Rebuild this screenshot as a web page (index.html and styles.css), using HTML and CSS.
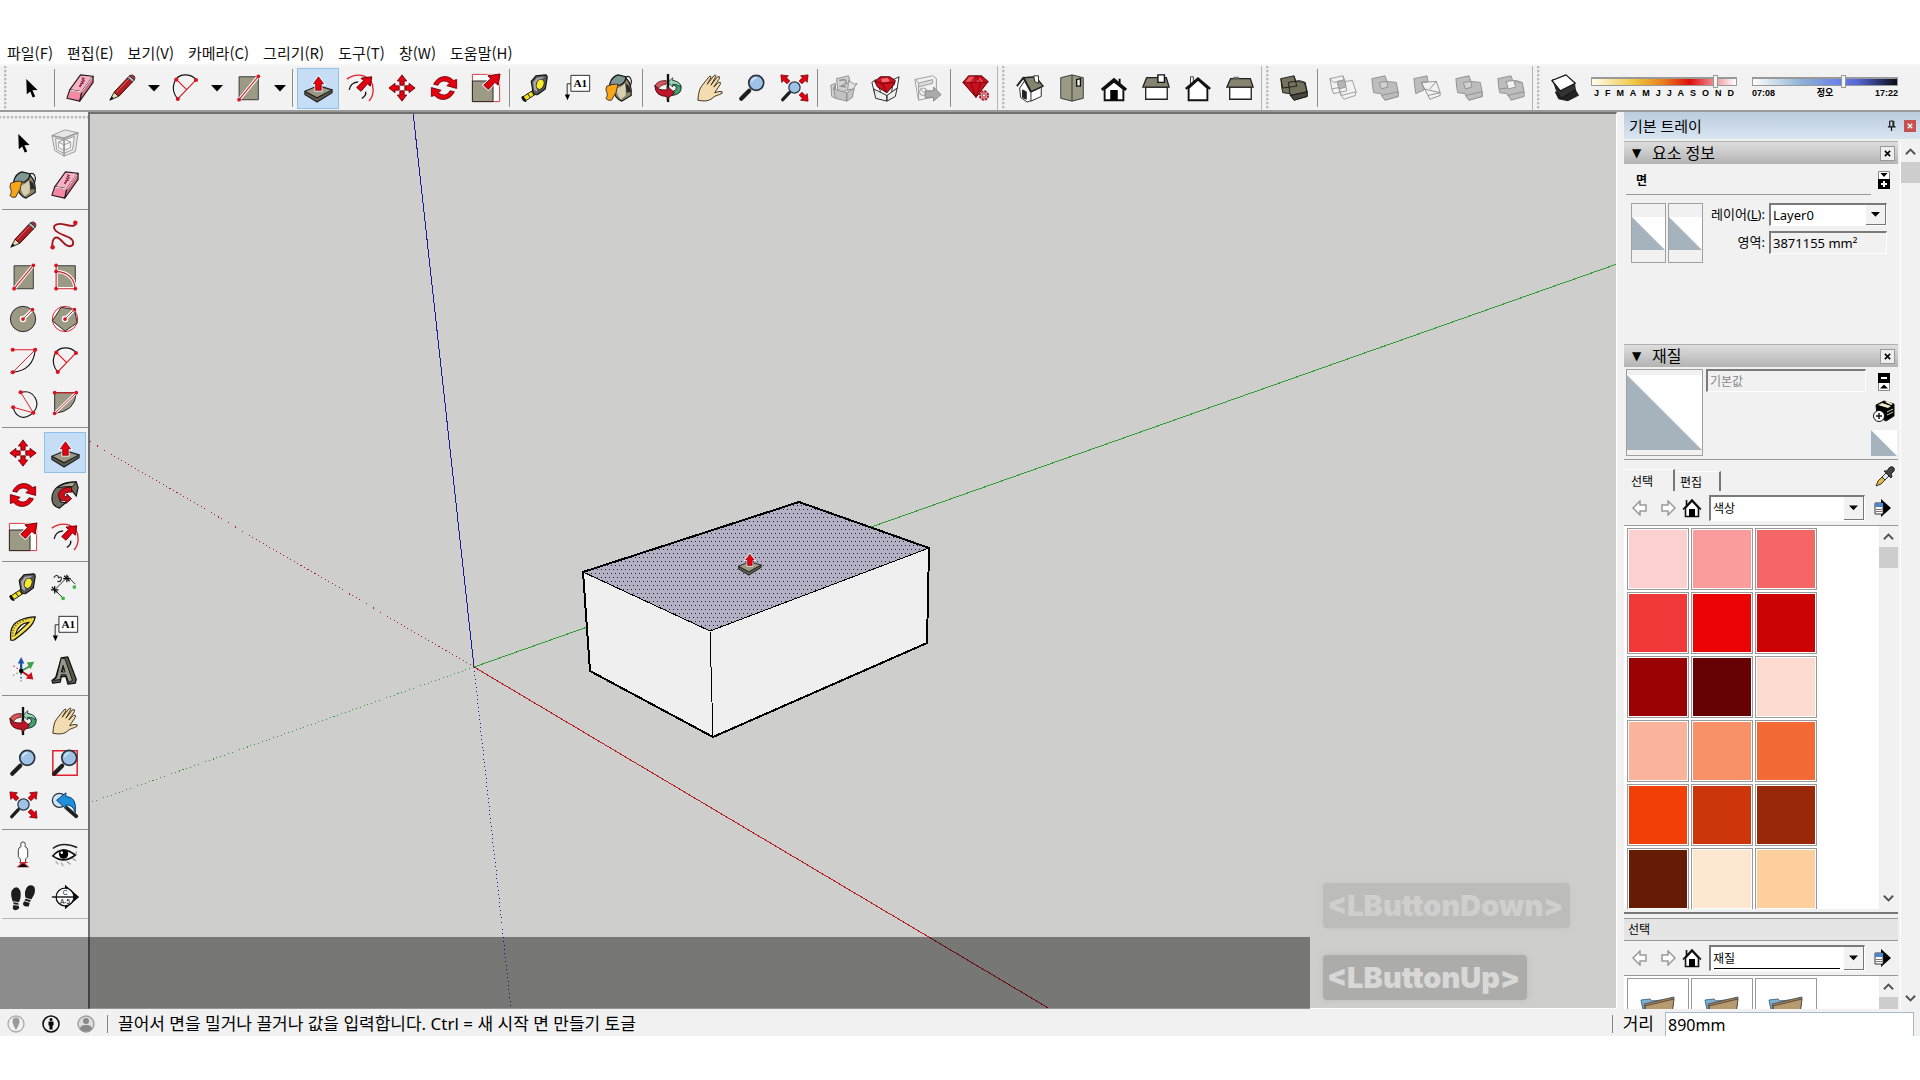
FILE: index.html
```html
<!DOCTYPE html>
<html lang="ko">
<head>
    <meta charset="utf-8">
    <title>모델링</title>
    <link rel="stylesheet" href="styles.css">
</head>
<body>

<!-- icon set, 32x32 grid -->
<svg class="defs" aria-hidden="true">
    <defs>
        <pattern id="dots" width="4" height="8" patternUnits="userSpaceOnUse">
            <rect width="4" height="8" fill="#b3b1c2"/>
            <rect x="1" y="1" width="1" height="1" fill="#1c1c50"/>
            <rect x="3" y="5" width="1" height="1" fill="#1c1c50"/>
        </pattern>
        <symbol id="i-select" viewBox="0 0 32 32"><path d="M11 6.500 23 18l-5.500.4L20.500 25l-2.700 1.200-2.600-6.600-3.700 3z"/></symbol>
        <symbol id="i-eraser" viewBox="0 0 32 32">
            <g stroke="#2a1a1e" stroke-width="1.200" stroke-linejoin="round">
                <path fill="#f7b3c4" d="M5 18 16.500 2 30 3.500 18 20z"/>
                <path fill="#f58aa5" d="M5 18 18 20l-2.300 10L2 27z"/>
                <path fill="#d96c88" d="M18 20 30 3.500V10L15.700 30z"/>
            </g>
            <path d="M18 5l3 1-3 1 3 1.500-4 .5 3 2-4 .5 2 1.500-3 .8 2 1.200" fill="none" stroke="#7a2038"/>
            <path d="M5.500 18.300 18 20.200 29 5" fill="none" stroke="#fff"/>
        </symbol>
        <symbol id="i-pencil" viewBox="0 0 32 32">
            <path fill="#ead9a8" stroke="#222" d="M3 29 7.500 20.500l5.200 4.300z"/>
            <path fill="#b01c22" stroke="#2a0a0a" d="M7.500 20.500 22 5l5.200 4.500-14.500 15.300z"/>
            <path stroke="#e8696c" d="M9.500 21 23.500 6.200"/>
            <path fill="#b9b9b9" stroke="#333" d="M22 5l2-2 5.200 4.300-2 2.200z"/>
            <path fill="#c2283a" stroke="#333" d="M24 3q3-2 5 .2 1.500 2 .2 4.100z"/>
            <path d="M3 29l2-4 2.200 2z"/>
        </symbol>
        <symbol id="i-free" viewBox="0 0 32 32">
            <path d="M2.500 28.500C2 19 6 17 10 20s6 8 11 8 5-6 0-9-13-4-16-9 4-7 11-5 13 2 11-3" fill="none" stroke="#a3131d" stroke-width="2"/>
            <g fill="#d9131f"><circle cx="2.800" cy="29" r="2.400"/><circle cx="27" cy="2.800" r="2.400"/></g>
        </symbol>
        <symbol id="i-rect" viewBox="0 0 32 32">
            <path fill="#9c9a84" stroke="#333" d="M6.500 4H27v24.500H6.500z"/>
            <path stroke="#fff" stroke-width="3.500" d="M6.500 28.500 27 3.500"/><path stroke="#c9202a" stroke-width="1.200" d="M6.500 28.500 27 3.500"/>
            <g fill="#d9131f"><circle cx="6.500" cy="28.500" r="2"/><circle cx="27" cy="3.500" r="2"/></g>
        </symbol>
        <symbol id="i-rrect" viewBox="0 0 32 32">
            <path fill="#9c9a84" stroke="#333" d="M6.500 4H27v24.500H6.500z"/>
            <path fill="none" stroke="#fff" stroke-width="3.500" d="M6.500 4v24.500H27Q25 11 6.500 10"/>
            <path fill="none" stroke="#c9202a" stroke-width="1.200" d="M6.500 4v24.500H27Q25 11 6.500 10"/>
            <g fill="#d9131f"><circle cx="6.500" cy="3.500" r="2"/><circle cx="6.500" cy="10" r="2"/><circle cx="6.500" cy="28.500" r="2"/><circle cx="27" cy="28.500" r="2"/></g>
        </symbol>
        <symbol id="i-circle" viewBox="0 0 32 32">
            <circle cx="16" cy="16" r="13.500" fill="#9c9a84" stroke="#222"/>
            <circle cx="16" cy="16" r="3.500" fill="#fff"/><path stroke="#fff" stroke-width="3.500" d="M16 16l10-10"/><path stroke="#c9202a" d="M16 16l10-10"/>
            <g fill="#d9131f"><circle cx="16" cy="16" r="2"/><circle cx="26" cy="6" r="2"/></g>
        </symbol>
        <symbol id="i-poly" viewBox="0 0 32 32">
            <circle cx="16" cy="16" r="13.500" fill="#fff" stroke="#d9131f"/>
            <path fill="#9c9a84" stroke="#222" d="M12 3.500 26 6l3 14-13 9L2.500 18z"/>
            <circle cx="16" cy="16" r="3.500" fill="#fff"/><path stroke="#fff" stroke-width="3.500" d="M16 16l10-10"/><path stroke="#c9202a" d="M16 16l10-10"/>
            <g fill="#d9131f"><circle cx="16" cy="16" r="2"/><circle cx="26" cy="6" r="2"/></g>
        </symbol>
        <symbol id="i-arc1" viewBox="0 0 32 32">
            <path fill="none" stroke="#111" stroke-width="1.200" d="M5 28Q27 26 29 4"/>
            <path fill="none" stroke="#d9131f" d="M5 4h24L5 28"/>
            <g fill="#d9131f"><circle cx="5" cy="4" r="2.200"/><circle cx="29" cy="4" r="2.200"/><circle cx="5" cy="28" r="2.200"/></g>
        </symbol>
        <symbol id="i-arc2" viewBox="0 0 32 32">
            <path fill="none" stroke="#111" stroke-width="1.200" d="M8 27.500C-1 16 5 2 16 2q8 0 12 5.500"/>
            <path fill="none" stroke="#d9131f" stroke-width="1.200" d="M7 7l10.500 10.500M8.300 27.500 27.700 7.300"/>
            <g fill="#d9131f"><circle cx="6.700" cy="7" r="2.200"/><circle cx="27.700" cy="7.500" r="2.200"/><circle cx="8.300" cy="27.700" r="2.200"/></g>
        </symbol>
        <symbol id="i-arc3" viewBox="0 0 32 32">
            <path fill="none" stroke="#111" stroke-width="1.200" d="M14 4.500C28 1 36 17 27 26S8 32 5.500 20.500"/>
            <path fill="none" stroke="#d9131f" d="M13.500 4.500 27 26.500 5.500 20.500"/>
            <g fill="#d9131f"><circle cx="13.500" cy="4.500" r="2.200"/><circle cx="27" cy="26.500" r="2.200"/><circle cx="5.500" cy="20.500" r="2.200"/></g>
        </symbol>
        <symbol id="i-pie" viewBox="0 0 32 32">
            <path fill="#9c9a84" stroke="#222" d="M5 27V5h23Q27 25 5 27z"/>
            <path fill="none" stroke="#fff" stroke-width="3" d="M5 27 28 5"/><path fill="none" stroke="#d9131f" d="M5 5h23L5 27"/>
            <g fill="#d9131f"><circle cx="5" cy="5" r="2"/><circle cx="28" cy="5" r="2"/><circle cx="5" cy="27" r="2"/></g>
        </symbol>
        <symbol id="i-push" viewBox="0 0 32 32">
            <g stroke="#222" stroke-width="1.200" stroke-linejoin="round">
                <path fill="#5c5b4d" d="M2 19.500 15 26.500 31 18v3L15 31 2 23z"/>
                <path fill="#9c9a84" d="M2 19.500 16 13.500 31 18 15 26.500z"/>
            </g>
            <path fill="#e3000f" stroke="#fff" stroke-width="2.400" d="M16.500 4 22 11.500h-2.500v7h-6v-7H11z"/>
            <path fill="#e3000f" stroke="#7a0008" stroke-width=".8" d="M16.500 4 22 11.500h-2.500v7h-6v-7H11z"/>
        </symbol>
        <symbol id="i-offset" viewBox="0 0 32 32">
            <path fill="none" stroke="#e0202a" stroke-width="1.400" d="M2 6.500C14-2 30 3 30 18q0 7-4.500 12"/>
            <path fill="none" stroke="#111" stroke-width="1.400" d="M4.500 18Q6 10 14 9.500M22 20q1 4-4 7"/>
            <path fill="#e3000f" stroke="#6a0008" d="M28.500 4 27 14l-3-2.500-7 8-4.500-4 7.500-7.500-3-2.500z"/>
        </symbol>
        <symbol id="i-move" viewBox="0 0 32 32">
            <g fill="#e3000f" stroke="#6a0008" stroke-width=".9">
                <path d="M16 2l5 6.500h-2.700V13h-4.600V8.500H11z"/><path d="M16 30l5-6.500h-2.700V19h-4.600v4.500H11z"/>
                <path d="M2 16l6.500-5v2.700H13v4.600H8.500V21z"/><path d="M30 16l-6.500-5v2.700H19v4.600h4.500V21z"/>
            </g>
        </symbol>
        <symbol id="i-rotate" viewBox="0 0 32 32">
            <g fill="#e3000f" stroke="#6a0008" stroke-width=".9">
                <path d="M5 12C9 3 20 1 26 8l3.500-1v9.500L19 13.500l3-2.300C18 7 12 8 9.500 13z"/>
                <path d="M27 20C23 29 12 31 6 24l-3.500 1v-9.500L13 18.500l-3 2.300c4 4.200 10 3.200 12.500-1.800z"/>
            </g>
        </symbol>
        <symbol id="i-scale" viewBox="0 0 32 32">
            <path fill="#fff" stroke="#e0303a" d="M1.500 1.500h29v29h-29z"/>
            <path fill="#9c9a84" stroke="#222" d="M1.500 8.500h22v22h-22z"/>
            <path fill="#e3000f" stroke="#fff" stroke-width="2.600" d="M31 1 29 13l-3.500-3-7 7.500-5-4.500L21 6l-3-3z"/>
            <path fill="#e3000f" stroke="#6a0008" d="M31 1 29 13l-3.500-3-7 7.500-5-4.500L21 6l-3-3z"/>
        </symbol>
        <symbol id="i-follow" viewBox="0 0 32 32">
            <path fill="#6d6c5e" stroke="#111" stroke-width="1.200" d="M2 20C2 8 12 2 28 2l2 6-2 9-5-6C15 11 10 14 10 19s3 5 7 5l-7 6Q2 28 2 20z"/>
            <path fill="#a9a791" stroke="#111" d="M8 8Q14 3 28 2l-4 5Q14 7 8 8z"/>
            <path fill="#c8101c" stroke="#5a0008" d="M23 8c-9-1-15 4-14 10q2 5 8 4l0 3 6-5-5-5v3c-5 0-3-6 5-5z"/>
        </symbol>
        <symbol id="i-tape" viewBox="0 0 32 32">
            <path fill="#f4e21c" stroke="#111" d="M3 25.500 16 17l3 4L7 29z"/>
            <path fill="#111" d="M3 24.500 6.500 30.500 3.500 29.500 1.800 26zM8 22l3 4M12 19.500l3 4" stroke="#111"/>
            <path fill="#555" stroke="#111" stroke-width="1.200" d="M12 9 17 3l10-1q2 0 2 3l-2 12-8 6q-3 1-5-2z"/>
            <path fill="#a9a9a9" d="M14 10l4-5 8-1-6 5-2 11-3-2z"/>
            <ellipse cx="21.500" cy="12" rx="4" ry="5.500" fill="#f8ec2a" stroke="#333" transform="rotate(20 21.500 12)"/>
        </symbol>
        <symbol id="i-text" viewBox="0 0 32 32">
            <path fill="#fff" stroke="#222" d="M9.500 2.500h20v17h-20z"/>
            <path fill="none" stroke="#222" d="M9.500 11.500h-4V24"/><path d="M3 23h5.500l-2.700 6z"/>
            <text x="19.500" y="15" text-anchor="middle" class="glyph-mono">A1</text>
        </symbol>
        <symbol id="i-paint" viewBox="0 0 32 32">
            <path fill="none" stroke="#222" stroke-width="1.200" d="M22 9q1-7 5-5 4 4 1 10"/>
            <path fill="#8c8467" stroke="#111" stroke-width="1.200" d="M11 11 24 6q6 6 5 18l-10 6Q11 27 9 15z"/>
            <path fill="#d8ceb0" d="M13 16q6 0 9-5 2 6 1 13l-5 4q-4-4-5-12z"/>
            <path fill="#2b2b2b" d="M23 11l4 3 2 6-5 1z"/>
            <path fill="#7f9893" stroke="#111" stroke-width="1.200" d="M6 12Q8 4 15 2l8 2q1 6-6 9Z"/>
            <path fill="#f8a617" stroke="#333" d="M3 14q7-3 12-2-1 9-7 17-4 1-6-2 3-3 0-9z"/>
        </symbol>
        <symbol id="i-orbit" viewBox="0 0 32 32">
            <path fill="#43a567" stroke="#123" d="M19 8q11 1 11 8t-10 8v-4q5-1 5-4t-7-4z"/>
            <path fill="#9ad8ae" stroke="#123" stroke-width=".8" d="M16 10l5-5v3q8 1 9 7-3-3-9-3v3z"/>
            <path fill="#d9555c" stroke="#411" stroke-width=".8" d="M2 14q2-6 12-6v4q-5 0-8 4z"/>
            <path stroke="#111" stroke-width="2.500" d="M16 1v30"/>
            <path fill="#c0142a" stroke="#411" d="M2 13q3 6 13 5v-4l8 7-8 7v-3Q2 25 2 13z"/>
        </symbol>
        <symbol id="i-hand" viewBox="0 0 32 32">
            <path fill="#f3ddb0" stroke="#3b2d18" stroke-linejoin="round" d="M3 29c1-7 1-11 4-15L15 4q2-2 2 1l-4 7 7-9q3-2 2 1l-5 9 7-9q3-1 2 2l-6 9 5-5q3-1 2 2l-6 9q5-2 8-1 1 2-3 3-5 1-9 5-5 3-14 1z"/>
        </symbol>
        <symbol id="i-zoom" viewBox="0 0 32 32">
            <path stroke="#1e1e1e" stroke-width="4.500" stroke-linecap="round" d="M4.500 27.500 13 19"/>
            <circle cx="20.500" cy="10.500" r="8" fill="#9fc3e6" stroke="#2a3540" stroke-width="1.800"/>
            <path fill="none" stroke="#d7e8f7" stroke-width="1.500" d="M15.500 9.500q1-4 5-4.500"/>
        </symbol>
        <symbol id="i-zoomwin" viewBox="0 0 32 32">
            <path fill="none" stroke="#e02030" stroke-width="1.600" d="M3 3h26v26H3z"/>
            <use href="#i-zoom"/>
        </symbol>
        <symbol id="i-extents" viewBox="0 0 32 32">
            <path stroke="#1e1e1e" stroke-width="3.500" stroke-linecap="round" d="M4 28.500 11 21"/>
            <circle cx="16.500" cy="15.500" r="6" fill="#9fc3e6" stroke="#2a3540" stroke-width="1.300"/>
            <g fill="#e3000f" stroke="#6a0008" stroke-width=".8">
                <path d="M2 2l8 1-2 2 3.500 3.500-3 3L5 8 3 10z"/><path d="M31 2l-8 1 2 2-3.500 3.500 3 3L28 8l2 2z"/><path d="M31 30l-8-1 2-2-3.500-3.500 3-3L28 24l2-2z"/>
            </g>
        </symbol>
        <symbol id="i-prev" viewBox="0 0 32 32">
            <circle cx="10" cy="11" r="7.500" fill="#cfe3f3" stroke="#2a3540" stroke-width="1.400"/>
            <path stroke="#222" stroke-width="4" stroke-linecap="round" d="M17 18.500 28 28"/>
            <path fill="#1f8fe0" stroke="#0d3d68" d="M7 11 17 3v4q12 0 10 17-3-9-10-8v4z"/>
        </symbol>
        <symbol id="i-box3d" viewBox="0 0 32 32">
            <g fill="none" stroke="#9a9a9a"><path fill="#e6e6e6" d="M2 8 16 2l14 3-3 20-12 5L5 24z"/><path fill="#f6f6f6" d="M6 11l9 2 11-4-2 14-9 4-8-4z"/>
            <path stroke-width="1.800" d="M2 8l13 3L30 5M15 11v19"/><path d="M9 15l7-3 6 3v6l-7 3-6-3zM9 15l6 3 7-3M15 18v6"/></g>
        </symbol>
        <symbol id="i-warehouse" viewBox="0 0 32 32">
            <g stroke="#8e8e8e"><path fill="#d0d0d0" d="M3 13l5-2v16l-4-2zM9 6l13-3 3 14-14 4z"/><path fill="#c2c2c2" d="M6 17l14 4v9L8 27zM20 21l8-5-2 10-6 4z"/>
            <path fill="#e2e2e2" d="M22 8l6 4 3-1-4 6-6 1z"/><path fill="none" stroke-width="1.500" d="M12 8l6-1 2 4-6 3 5 1M6 17l2-4"/></g>
        </symbol>
        <symbol id="i-rubybox" viewBox="0 0 32 32">
            <g stroke="#222"><path fill="#fff" d="M2 10l4-3 5 12-2 6-4-3zM25 7l6-3-2 12-6 5z"/><path fill="#eee" d="M4 17l14 7v6L6 27zM18 24l11-8-2 9-9 5z"/></g>
            <path fill="#cc1020" stroke="#4b0008" d="M5 9l6-5h10l6 4-1 4-8 9-10-6z"/><path fill="#ef6a70" d="M12 6l7-1 2 4-8 1z"/><path stroke="#6a0008" fill="none" d="M5 9l8 2 13-1M13 11l5 10"/>
        </symbol>
        <symbol id="i-share" viewBox="0 0 32 32">
            <g fill="#f2f2f2" stroke="#999"><path d="M3 7 22 3l4 3v19L7 29z"/><path fill="#ddd" d="M6 11l16-4v4L6 15z"/><circle cx="12" cy="20" r="4"/><path d="M9 17l6 6M4 7l3 4v18"/></g>
            <path fill="#ababab" stroke="#888" d="M14 19h9v-4l8 8-8 7v-4h-9z"/>
        </symbol>
        <symbol id="i-ruby" viewBox="0 0 32 32">
            <path fill="#c8101c" stroke="#5a0008" d="M2 10 8 3h14l7 6-13 17z"/><path fill="#f0575c" d="M9 4h6l-3 6H4zM16 10l4-5 4 5z"/>
            <path fill="none" stroke="#7c0810" d="M2 10h27M10 10l6 16 5-16-5-7-6 7"/>
            <circle cx="24.500" cy="24" r="4.500" fill="#e89aa0" stroke="#a3202a" stroke-width="2" stroke-dasharray="2.500 1"/><circle cx="24.500" cy="24" r="1.800" fill="#fff" stroke="#a3202a"/>
        </symbol>
        <symbol id="i-iso" viewBox="0 0 32 32">
            <g stroke="#222" stroke-linejoin="round"><path fill="#fff" d="M5 16l7-10 10 13-1 9-8 3-7-5z"/><path fill="#fff" d="M17 20l11-5v10l-11 5z"/>
            <path fill="#86846f" stroke-width="1.500" d="M9 5 22 4l8 10-13 6z"/><path fill="#fff" d="M20 3h5v8l-4-2z"/><path stroke-width="2" fill="none" d="M2 14l7-9 8 15"/><path fill="#222" d="M8 18l4 2v8l-4-2z"/></g>
        </symbol>
        <symbol id="i-top" viewBox="0 0 32 32">
            <path fill="#9c9a84" stroke="#333" d="M4 5l12-3 12 3v22l-12 3-12-3z"/><path stroke="#333" d="M16 2v28"/><path fill="#fff" stroke="#111" stroke-width="1.500" d="M21 7l4-1v8h-4z"/>
        </symbol>
        <symbol id="i-front" viewBox="0 0 32 32">
            <path fill="#fff" stroke="#111" stroke-width="2" d="M6 17v12h20V17L16 9z"/><path stroke="#111" stroke-width="3" fill="none" d="M3 18 16 7l13 11"/><path d="M12 18h8v11h-8zM21 6h2v5l-2-1z"/>
        </symbol>
        <symbol id="i-right" viewBox="0 0 32 32">
            <path fill="#fff" stroke="#222" stroke-width="1.400" d="M5 15h23v13H5z"/><path fill="#86846f" stroke="#222" stroke-width="1.400" d="M6 5h21l3 10H2z"/><path fill="#fff" stroke="#111" stroke-width="1.500" d="M18 2h7v8h-7z"/>
        </symbol>
        <symbol id="i-back" viewBox="0 0 32 32">
            <path fill="#fff" stroke="#333" d="M8 4h3v8H8z"/><path fill="#fff" stroke="#111" stroke-width="2" d="M6 16v13h20V16L16 7z"/><path stroke="#111" stroke-width="2.500" fill="none" d="M3 17 16 6l13 11"/>
        </symbol>
        <symbol id="i-left" viewBox="0 0 32 32">
            <path fill="#fff" stroke="#222" stroke-width="1.400" d="M5 15h23v13H5z"/><path fill="#86846f" stroke="#222" stroke-width="1.400" d="M6 6h21l3 9H2z"/><path fill="#777" d="M9 4h6v2H9z"/>
        </symbol>
        <symbol id="i-shell" viewBox="0 0 32 32">
            <g fill="#74715d" stroke="#1d1c16" stroke-linejoin="round"><path d="M2 6l14-3 2 6 10 1 2 10v5l-14 4-4-7-8-1-1-5z"/><path fill="#4a483c" d="M12 24l18-4v5l-14 4z"/><path fill="none" d="M2 6l2 10 15-2-3-11M10 10l12-2 5 2 3 10-18 4z"/></g>
        </symbol>
        <symbol id="i-wire" viewBox="0 0 32 32">
            <g fill="none" stroke="#9a9a9a"><path d="M2 6l14-3 3 11-15 3zM4 17l2 5 14-3-1-5M10 10l16-2 4 12-16 4zM14 24l3 4 12-4 1-4"/><path d="M10 10l4 14M16 3l3 11M2 6l4 4 12-3"/><path fill="#b5b5b5" d="M10 9l8-1 1 7-7 2z"/></g>
        </symbol>
        <symbol id="i-union" viewBox="0 0 32 32">
            <g fill="#bdbdbd" stroke="#8f8f8f" stroke-linejoin="round"><path d="M2 6l14-3 2 6 10 1 2 10v5l-14 4-4-7-8-1-1-5z"/><path d="M12 24l18-4v5l-14 4z"/><path fill="#d2d2d2" d="M10 10l8-1 1 6-7 2z"/></g>
        </symbol>
        <symbol id="i-solid" viewBox="0 0 32 32">
            <g fill="#bdbdbd" stroke="#8f8f8f" stroke-linejoin="round"><path d="M2 6l14-3 2 6 10 1 2 10v5l-14 4-4-7-8-1-1-5z"/><path fill="none" d="M4 17l8-1M10 10l12-2 5 2M12 24l18-4"/><path fill="#f2f2f2" d="M11 9l8-1 2 7-8 2z"/></g>
        </symbol>
        <symbol id="i-trim" viewBox="0 0 32 32">
            <g fill="#bdbdbd" stroke="#8f8f8f" stroke-linejoin="round"><path d="M2 6l14-3 1 6-7 1 3 8-9 4z"/><path fill="none" d="M10 10l16-1 4 12-13 3zM17 24l2 4 11-4v-3M19 17l7-8M13 17l17 4"/></g>
        </symbol>
        <symbol id="i-shadow" viewBox="0 0 32 32">
            <path fill="#222" d="M5 20l4 8 10 2 12-6-4-7z"/><path fill="#333" stroke="#111" d="M3 7l4 12 5 8 15-9-1-8z"/><path fill="#fff" stroke="#111" stroke-width="1.300" stroke-linejoin="round" d="M2 8l15-6 10 9-16 8z"/>
        </symbol>
        <symbol id="i-dim" viewBox="0 0 32 32">
            <path fill="none" stroke="#222" d="M5 19 20 4M5 19l9 9M18 4l9 9"/><path stroke="#111" stroke-width="1.300" d="M1 19h8M5 15v8M2 16l6 6M14 7h8M18 3v8M15 4l6 6"/>
            <g fill="#42b549"><circle cx="14" cy="28" r="2"/><circle cx="26" cy="16" r="2"/></g><path fill="none" stroke="#222" stroke-width="1.200" d="M4 6q4-5 5 0 4-2 3 2-1 3-4 2"/>
        </symbol>
        <symbol id="i-protractor" viewBox="0 0 32 32">
            <path fill="#f2dd4a" stroke="#111" stroke-width="1.300" fill-rule="evenodd" d="M3 28Q1 12 12 7q8-4 17-4-1 7-9 14T6 28zM8 22l14-13Q11 10 8 22z"/><path fill="none" stroke="#554a10" stroke-dasharray="1 2" stroke-width="2" d="M5 24Q4 13 14 8t12-3"/>
        </symbol>
        <symbol id="i-axes" viewBox="0 0 32 32">
            <path stroke="#1d55a5" stroke-width="2.500" d="M14 16V6"/><path fill="#1d55a5" d="M10.500 8 14 1l3.500 7z"/>
            <path stroke="#3fa04a" stroke-width="2" d="M14 16l9-5"/><path fill="#3fa04a" d="M20 7l8-1-4 8z"/>
            <path stroke="#c8101c" stroke-width="2" d="M14 16l9 6"/><path fill="#c8101c" d="M25 17l2 8-8-1z"/>
            <path stroke="#c8101c" stroke-dasharray="2 2" d="M14 16 5 10"/><path stroke="#3fa04a" stroke-dasharray="2 2" d="M14 16l-9 5"/><path stroke="#1d55a5" stroke-dasharray="2 2" stroke-width="1.500" d="M14 18v9"/><circle cx="14" cy="16" r="2.300"/>
        </symbol>
        <symbol id="i-text3d" viewBox="0 0 32 32">
            <path fill="#5a594d" stroke="#111" stroke-width="1.300" stroke-linejoin="round" fill-rule="evenodd" d="M12 2l7-1 9 24-1 4-8 1-2-8h-5l-1 6-8 1-1-3 4-3zM15 11l-2 7h4z"/><path fill="#99978a" stroke="#111" d="M12 2l4 1 8 23-4 2-3-8h-5l-1 5-7 1 3-3 4-17zM14 10l-2 7h4z"/>
        </symbol>
        <symbol id="i-camera" viewBox="0 0 32 32">
            <path fill="#fff" stroke="#333" d="M13.500 5q0-3 2.500-3t2.500 3l-.5 2q3 1 3 4v7l-2 2-1 7h-4l-1-7-2-2v-7q0-3 3-4z"/><path stroke="#e0202a" stroke-width="1.200" d="M10 29l6-5 6 5M12 24h9"/>
        </symbol>
        <symbol id="i-eye" viewBox="0 0 32 32">
            <path fill="none" stroke="#222" stroke-width="1.500" d="M3 9Q13 1 29 8"/><path fill="#fff" stroke="#111" stroke-width="1.800" d="M3 17Q13 5 27 16q-12 10-24 1z"/><circle cx="14.500" cy="15" r="5"/><circle cx="12.500" cy="13.500" r="1.400" fill="#fff"/>
            <path fill="none" stroke="#aaa" stroke-width="1.500" d="M6 23l3 3M12 24l2 4M18 23l4 3M24 20l4 2M28 12v4"/>
        </symbol>
        <symbol id="i-feet" viewBox="0 0 32 32">
            <g fill="#1c1c1c"><path d="M4 9q5-7 9 0 2 6-2 14l1 5q-5 4-7 0l1-5Q2 14 4 9z"/><path d="M19 8q3-7 9-3 2 5-1 10l-3 5-2 6q-6 1-6-3l3-6q-2-5 0-9z"/></g><path stroke="#eee" d="M5 21l7 1M5 24l7 1M17 17l8 2M17 20l7 2"/>
        </symbol>
        <symbol id="i-section" viewBox="0 0 32 32">
            <path d="M16 3l15 13-15 13z"/><circle cx="16" cy="16" r="9.500" fill="#fff" stroke="#111" stroke-width="1.400"/><path stroke="#111" stroke-width="1.500" d="M2 16h28"/>
            <text x="16" y="14" text-anchor="middle" class="glyph-tiny">C</text><text x="16" y="23" text-anchor="middle" class="glyph-tiny">A-5</text>
        </symbol>
        <symbol id="i-caret" viewBox="0 0 12 7"><path d="M0 0h12L6 6.500z"/></symbol>
        <symbol id="i-up" viewBox="0 0 12 8"><path fill="none" stroke="#505050" stroke-width="2" d="M1 7l5-5 5 5"/></symbol>
        <symbol id="i-down" viewBox="0 0 12 8"><path fill="none" stroke="#505050" stroke-width="2" d="M1 1l5 5 5-5"/></symbol>
        <symbol id="i-x" viewBox="0 0 8 8"><path fill="none" stroke="currentColor" stroke-width="1.800" d="M1 1l6 6M7 1 1 7"/></symbol>
        <symbol id="i-prevpage" viewBox="0 0 16 16"><path fill="#fff" stroke="#999" stroke-width="1.500" d="M1 8l7-7v4h6v6H8v4z"/></symbol>
        <symbol id="i-nextpage" viewBox="0 0 16 16"><path fill="#fff" stroke="#999" stroke-width="1.500" d="M15 8 8 1v4H2v6h6v4z"/></symbol>
        <symbol id="i-home" viewBox="0 0 20 20"><path fill="#fff" stroke="#111" stroke-width="1.600" d="M3.500 10v8.500h13V10L10 3z"/><path fill="none" stroke="#111" stroke-width="1.600" d="M1 11.500 10 2l9 9.500M4.500 8V2"/><path d="M7 11h6v8H7z"/></symbol>
        <symbol id="i-detail" viewBox="0 0 18 18"><path d="M7 0l10 9-10 9z"/><path fill="#fff" stroke="#333" d="M1 4h8v11H1z"/><path fill="#4d86c6" d="M1 4h8v4H1z"/><path stroke="#777" d="M2 10.500h6M2 12.500h6"/></symbol>
        <symbol id="i-folder" viewBox="0 0 36 24"><path fill="#7db4d6" stroke="#4a6f8c" d="M1 3l9-1 2 2 10-1v20H5z"/><path fill="#a08058" stroke="#555" d="M4 7 34 0l-3 24H6z"/><path fill="#b89a70" stroke="#5d5040" d="M5 9 34 2l-3 22H7z"/></symbol>
        <symbol id="i-face" viewBox="0 0 32 32"><path fill="#fff" d="M0 0h32v32H0z"/><path fill="#a6b3bd" d="M0 0l32 32H0z"/></symbol>
    </defs>
</svg>

<nav class="menu">
    <a href="#">파일(F)</a>
    <a href="#">편집(E)</a>
    <a href="#">보기(V)</a>
    <a href="#">카메라(C)</a>
    <a href="#">그리기(R)</a>
    <a href="#">도구(T)</a>
    <a href="#">창(W)</a>
    <a href="#">도움말(H)</a>
</nav>

<header class="toolbar">
    <div class="group">
        <button class="tool" aria-label="선택"><svg><use href="#i-select"/></svg></button>
        <span class="sep"></span>
        <button class="tool" aria-label="지우개"><svg><use href="#i-eraser"/></svg></button>
        <button class="tool" aria-label="선"><svg><use href="#i-pencil"/></svg></button>
        <button class="more" aria-label="선 도구"><svg><use href="#i-caret"/></svg></button>
        <button class="tool" aria-label="호"><svg><use href="#i-arc2"/></svg></button>
        <button class="more" aria-label="호 도구"><svg><use href="#i-caret"/></svg></button>
        <button class="tool" aria-label="직사각형"><svg><use href="#i-rect"/></svg></button>
        <button class="more" aria-label="도형 도구"><svg><use href="#i-caret"/></svg></button>
        <span class="sep"></span>
        <button class="tool active" aria-label="밀기/끌기"><svg><use href="#i-push"/></svg></button>
        <button class="tool" aria-label="오프셋"><svg><use href="#i-offset"/></svg></button>
        <button class="tool" aria-label="이동"><svg><use href="#i-move"/></svg></button>
        <button class="tool" aria-label="회전"><svg><use href="#i-rotate"/></svg></button>
        <button class="tool" aria-label="배율"><svg><use href="#i-scale"/></svg></button>
        <span class="sep"></span>
        <button class="tool" aria-label="줄자"><svg><use href="#i-tape"/></svg></button>
        <button class="tool" aria-label="텍스트"><svg><use href="#i-text"/></svg></button>
        <button class="tool" aria-label="페인트통"><svg><use href="#i-paint"/></svg></button>
        <span class="sep"></span>
        <button class="tool" aria-label="궤도"><svg><use href="#i-orbit"/></svg></button>
        <button class="tool" aria-label="이동 보기"><svg><use href="#i-hand"/></svg></button>
        <button class="tool" aria-label="확대/축소"><svg><use href="#i-zoom"/></svg></button>
        <button class="tool" aria-label="범위 확대"><svg><use href="#i-extents"/></svg></button>
        <span class="sep"></span>
        <button class="tool" aria-label="모델 가져오기"><svg><use href="#i-warehouse"/></svg></button>
        <button class="tool" aria-label="확장 프로그램"><svg><use href="#i-rubybox"/></svg></button>
        <button class="tool" aria-label="내보내기"><svg><use href="#i-share"/></svg></button>
        <span class="sep"></span>
        <button class="tool" aria-label="확장 관리자"><svg><use href="#i-ruby"/></svg></button>
    </div>
    <div class="group">
        <button class="tool" aria-label="등각"><svg><use href="#i-iso"/></svg></button>
        <button class="tool" aria-label="위"><svg><use href="#i-top"/></svg></button>
        <button class="tool" aria-label="앞"><svg><use href="#i-front"/></svg></button>
        <button class="tool" aria-label="오른쪽"><svg><use href="#i-right"/></svg></button>
        <button class="tool" aria-label="뒤"><svg><use href="#i-back"/></svg></button>
        <button class="tool" aria-label="왼쪽"><svg><use href="#i-left"/></svg></button>
    </div>
    <div class="group">
        <button class="tool" aria-label="외부 쉘"><svg><use href="#i-shell"/></svg></button>
        <span class="sep"></span>
        <button class="tool" aria-label="교차"><svg><use href="#i-wire"/></svg></button>
        <button class="tool" aria-label="결합"><svg><use href="#i-union"/></svg></button>
        <button class="tool" aria-label="빼기"><svg><use href="#i-trim"/></svg></button>
        <button class="tool" aria-label="트림"><svg><use href="#i-union"/></svg></button>
        <button class="tool" aria-label="분할"><svg><use href="#i-solid"/></svg></button>
    </div>
    <div class="group sun">
        <button class="tool" aria-label="그림자"><svg><use href="#i-shadow"/></svg></button>
        <div class="slider">
            <input class="range months" type="range" min="0" max="100" value="87" aria-label="날짜">
            <div class="ticks"><span>J</span><span>F</span><span>M</span><span>A</span><span>M</span><span>J</span><span>J</span><span>A</span><span>S</span><span>O</span><span>N</span><span>D</span></div>
        </div>
        <div class="slider">
            <input class="range hours" type="range" min="0" max="100" value="63" aria-label="시간">
            <div class="ticks wide"><span>07:08</span><span>정오</span><span>17:22</span></div>
        </div>
    </div>
</header>

<main class="work">
    <aside class="palette">
        <div class="pair">
            <button class="tool" aria-label="선택"><svg><use href="#i-select"/></svg></button>
            <button class="tool" aria-label="구성 요소"><svg><use href="#i-box3d"/></svg></button>
            <button class="tool" aria-label="페인트통"><svg><use href="#i-paint"/></svg></button>
            <button class="tool" aria-label="지우개"><svg><use href="#i-eraser"/></svg></button>
        </div>
        <div class="pair">
            <button class="tool" aria-label="선"><svg><use href="#i-pencil"/></svg></button>
            <button class="tool" aria-label="자유곡선"><svg><use href="#i-free"/></svg></button>
            <button class="tool" aria-label="직사각형"><svg><use href="#i-rect"/></svg></button>
            <button class="tool" aria-label="회전된 직사각형"><svg><use href="#i-rrect"/></svg></button>
            <button class="tool" aria-label="원"><svg><use href="#i-circle"/></svg></button>
            <button class="tool" aria-label="다각형"><svg><use href="#i-poly"/></svg></button>
            <button class="tool" aria-label="호"><svg><use href="#i-arc1"/></svg></button>
            <button class="tool" aria-label="2점 호"><svg><use href="#i-arc2"/></svg></button>
            <button class="tool" aria-label="3점 호"><svg><use href="#i-arc3"/></svg></button>
            <button class="tool" aria-label="파이"><svg><use href="#i-pie"/></svg></button>
        </div>
        <div class="pair">
            <button class="tool" aria-label="이동"><svg><use href="#i-move"/></svg></button>
            <button class="tool active" aria-label="밀기/끌기"><svg><use href="#i-push"/></svg></button>
            <button class="tool" aria-label="회전"><svg><use href="#i-rotate"/></svg></button>
            <button class="tool" aria-label="따라가기"><svg><use href="#i-follow"/></svg></button>
            <button class="tool" aria-label="배율"><svg><use href="#i-scale"/></svg></button>
            <button class="tool" aria-label="오프셋"><svg><use href="#i-offset"/></svg></button>
        </div>
        <div class="pair">
            <button class="tool" aria-label="줄자"><svg><use href="#i-tape"/></svg></button>
            <button class="tool" aria-label="치수"><svg><use href="#i-dim"/></svg></button>
            <button class="tool" aria-label="각도기"><svg><use href="#i-protractor"/></svg></button>
            <button class="tool" aria-label="텍스트"><svg><use href="#i-text"/></svg></button>
            <button class="tool" aria-label="축"><svg><use href="#i-axes"/></svg></button>
            <button class="tool" aria-label="3D 텍스트"><svg><use href="#i-text3d"/></svg></button>
        </div>
        <div class="pair">
            <button class="tool" aria-label="궤도"><svg><use href="#i-orbit"/></svg></button>
            <button class="tool" aria-label="이동 보기"><svg><use href="#i-hand"/></svg></button>
            <button class="tool" aria-label="확대/축소"><svg><use href="#i-zoom"/></svg></button>
            <button class="tool" aria-label="창 확대"><svg><use href="#i-zoomwin"/></svg></button>
            <button class="tool" aria-label="범위 확대"><svg><use href="#i-extents"/></svg></button>
            <button class="tool" aria-label="이전"><svg><use href="#i-prev"/></svg></button>
        </div>
        <div class="pair">
            <button class="tool" aria-label="카메라 배치"><svg><use href="#i-camera"/></svg></button>
            <button class="tool" aria-label="둘러보기"><svg><use href="#i-eye"/></svg></button>
            <button class="tool" aria-label="걷기"><svg><use href="#i-feet"/></svg></button>
            <button class="tool" aria-label="단면"><svg><use href="#i-section"/></svg></button>
        </div>
    </aside>

    <section class="canvas">
        <svg class="scene" viewBox="90 114 1526 895" preserveAspectRatio="xMinYMin slice" shape-rendering="crispEdges">
            <path class="axis blue" d="M413 112 474 667"/>
            <path class="axis green" d="M474 667 1617 264"/>
            <path class="axis red" d="M474 667 1050 1009"/>
            <path class="axis blue far" d="M474 667 511 1009"/>
            <path class="axis green far" d="M474 667 89 803"/>
            <path class="axis red far" d="M474 667 89 441"/>
            <path fill="#efefef" d="M583 572 710 631 929 548 927 643 713 737 590 671z"/>
            <path fill="url(#dots)" d="M583 572 799 502 929 548 710 631z"/>
            <path class="edge" d="M583 572 710 631 929 548M710 631 713 737"/>
            <path class="edge outline" d="M583 572 799 502 929 548 927 643 713 737 590 671z"/>
            <use href="#i-push" x="737" y="551" width="25" height="25" shape-rendering="auto"/>
        </svg>
        <div class="keys">
            <kbd class="key fading">&lt;LButtonDown&gt;</kbd>
            <kbd class="key">&lt;LButtonUp&gt;</kbd>
        </div>
    </section>

    <aside class="tray">
        <div class="tray-title">
            <h1>기본 트레이</h1>
            <button class="pin" aria-label="고정"><svg viewBox="0 0 10 12"><path fill="none" stroke="#111" stroke-width="1.300" d="M3 1v6M7.500 1v6M3 1h4M1 7.500h8.500M5 8v4"/><path stroke="#111" d="M6.500 1v6"/></svg></button>
            <button class="close-tray" aria-label="닫기"><svg><use href="#i-x"/></svg></button>
        </div>
        <div class="tray-body">
            <div class="panels">
                <section class="panel entity">
                    <div class="panel-head"><span class="arrow">▼</span><h2>요소 정보</h2><button class="close" aria-label="닫기"><svg><use href="#i-x"/></svg></button></div>
                    <div class="entity-type"><strong>면</strong>
                        <button class="mini" aria-label="자세히"><svg viewBox="0 0 12 18"><path fill="#fff" stroke="#888" d="M.5.5h11v17H.500z"/><path d="M2.500 2h7L6 6zM0 8h12v10H0z"/><path stroke="#fff" stroke-width="2" d="M3 13h6M6 10v6"/></svg></button>
                    </div>
                    <div class="entity-info">
                        <span class="face"><svg viewBox="0 0 32 32"><use href="#i-face"/></svg></span>
                        <span class="face"><svg viewBox="0 0 32 32"><use href="#i-face"/></svg></span>
                        <div class="fields">
                            <label for="layer">레이어(<u>L</u>):</label>
                            <span class="drop"><select id="layer"><option>Layer0</option></select><svg><use href="#i-caret"/></svg></span>
                            <label for="area">영역:</label>
                            <input class="field" id="area" value="3871155 mm²" readonly>
                        </div>
                    </div>
                </section>

                <section class="panel">
                    <div class="panel-head"><span class="arrow">▼</span><h2>재질</h2><button class="close" aria-label="닫기"><svg><use href="#i-x"/></svg></button></div>
                    <div class="material">
                        <span class="face big"><svg viewBox="0 0 32 32"><use href="#i-face"/></svg></span>
                        <input class="field name" value="기본값" aria-label="재질 이름" disabled>
                        <div class="side">
                            <button class="mini" aria-label="보조 창"><svg viewBox="0 0 12 18"><path fill="#fff" stroke="#888" d="M.5.5h11v17H.500z"/><path d="M0 0h12v10H0zM2 15.500h8L6 11.500z"/><path stroke="#fff" stroke-width="2" d="M3 5h6"/></svg></button>
                            <button class="create" aria-label="재질 만들기"><svg viewBox="0 0 22 22"><path stroke="#111" d="M3 5l8-4 10 3v12l-8 5-9-5z"/><path fill="#f3ecc9" d="M5 5l4-2 9 3-3 2zM12 2l2-1 6 3-2 1z"/><path stroke="#d8d0ac" d="M14 12l6-3M14 15l6-3"/><circle cx="6" cy="16" r="5.500" fill="#fff" stroke="#111"/><path stroke="#111" stroke-width="1.500" d="M3 16h6M6 13v6"/></svg></button>
                            <svg class="chip" viewBox="0 0 32 32"><use href="#i-face"/></svg>
                        </div>
                    </div>
                    <div class="tabs">
                        <button class="tab on">선택</button>
                        <button class="tab">편집</button>
                        <button class="dropper" aria-label="샘플"><svg viewBox="0 0 22 22"><path fill="#e5b83c" stroke="#333" d="M2 20l2-5 8-8 3 3-8 8z"/><path fill="#dfe6ea" stroke="#333" d="M8 11l4-4 3 3-4 4z"/><path fill="#444" stroke="#222" d="M10 5l7 7 1-2-1-2 3-3q1-3-1-4-2-1-4 1l-2 3z"/></svg></button>
                    </div>
                    <div class="nav">
                        <button class="page" aria-label="뒤로"><svg><use href="#i-prevpage"/></svg></button>
                        <button class="page" aria-label="앞으로"><svg><use href="#i-nextpage"/></svg></button>
                        <button class="home" aria-label="모델"><svg><use href="#i-home"/></svg></button>
                        <span class="drop"><select aria-label="재질 모음"><option>색상</option></select><svg><use href="#i-caret"/></svg></span>
                        <button class="detail" aria-label="세부 정보"><svg><use href="#i-detail"/></svg></button>
                    </div>
                    <div class="list">
                        <div class="grid">
                            <button class="swatch c1" aria-label="색상 1"></button>
                            <button class="swatch c2" aria-label="색상 2"></button>
                            <button class="swatch c3" aria-label="색상 3"></button>
                            <button class="swatch c4" aria-label="색상 4"></button>
                            <button class="swatch c5" aria-label="색상 5"></button>
                            <button class="swatch c6" aria-label="색상 6"></button>
                            <button class="swatch c7" aria-label="색상 7"></button>
                            <button class="swatch c8" aria-label="색상 8"></button>
                            <button class="swatch c9" aria-label="색상 9"></button>
                            <button class="swatch c10" aria-label="색상 10"></button>
                            <button class="swatch c11" aria-label="색상 11"></button>
                            <button class="swatch c12" aria-label="색상 12"></button>
                            <button class="swatch c13" aria-label="색상 13"></button>
                            <button class="swatch c14" aria-label="색상 14"></button>
                            <button class="swatch c15" aria-label="색상 15"></button>
                            <button class="swatch c16" aria-label="색상 16"></button>
                            <button class="swatch c17" aria-label="색상 17"></button>
                            <button class="swatch c18" aria-label="색상 18"></button>
                        </div>
                        <div class="scroll"><svg><use href="#i-up"/></svg><i class="thumb"></i><svg class="end"><use href="#i-down"/></svg></div>
                    </div>
                </section>

                <section class="second">
                    <h3>선택</h3>
                    <div class="nav">
                        <button class="page" aria-label="뒤로"><svg><use href="#i-prevpage"/></svg></button>
                        <button class="page" aria-label="앞으로"><svg><use href="#i-nextpage"/></svg></button>
                        <button class="home" aria-label="모델"><svg><use href="#i-home"/></svg></button>
                        <span class="drop underlined"><select aria-label="보조 재질 모음"><option>재질</option></select><svg><use href="#i-caret"/></svg></span>
                        <button class="detail" aria-label="세부 정보"><svg><use href="#i-detail"/></svg></button>
                    </div>
                    <div class="list short">
                        <div class="grid">
                            <button class="swatch" aria-label="폴더 1"><svg><use href="#i-folder"/></svg></button>
                            <button class="swatch" aria-label="폴더 2"><svg><use href="#i-folder"/></svg></button>
                            <button class="swatch" aria-label="폴더 3"><svg><use href="#i-folder"/></svg></button>
                        </div>
                        <div class="scroll"><svg><use href="#i-up"/></svg><i class="thumb"></i></div>
                    </div>
                </section>
            </div>
            <div class="scroll outer"><svg><use href="#i-up"/></svg><i class="thumb"></i><svg class="end"><use href="#i-down"/></svg></div>
        </div>
    </aside>
    <div class="shade"></div>
</main>

<footer class="status">
    <button class="badge" aria-label="위치"><svg viewBox="0 0 18 18"><circle cx="9" cy="9" r="8" fill="none" stroke="#aaa" stroke-width="1.300"/><path fill="#999" d="M5.500 6a3.500 3.500 0 0 1 7 0Q12.500 9 9 15 5.500 9 5.500 6z"/></svg></button>
    <button class="badge" aria-label="크레딧"><svg viewBox="0 0 18 18"><circle cx="9" cy="9" r="8" fill="none" stroke="#111" stroke-width="1.600"/><circle cx="9" cy="4.500" r="1.500"/><path d="M6.500 6.500h5v4h-1v4h-3v-4h-1z"/></svg></button>
    <button class="badge" aria-label="로그인"><svg viewBox="0 0 18 18"><circle cx="9" cy="9" r="8" fill="#ddd" stroke="#999" stroke-width="1.300"/><circle cx="9" cy="6" r="3" fill="#888"/><path fill="#888" d="M3 14q0-4 6-4t6 4q-6 5-12 0z"/></svg></button>
    <p>끌어서 면을 밀거나 끌거나 값을 입력합니다. Ctrl = 새 시작 면 만들기 토글</p>
    <label for="distance">거리</label>
    <input id="distance" value="890mm">
</footer>

</body>
</html>
```
FILE: styles.css
```css
* {
    box-sizing: border-box;
    margin: 0;
    padding: 0;
}

body {
    display: flex;
    flex-direction: column;
    height: 100vh;
    padding: 40px 0 44px;
    background: #fff;
    color: #000;
    font-family: "Noto Sans", "Noto Sans CJK KR", sans-serif;
    font-size: 12px;
    overflow: hidden;
}

.defs {
    position: absolute;
    width: 0;
    height: 0;
}

button {
    display: flex;
    align-items: center;
    justify-content: center;
    flex: none;
    border: 0;
    background: none;
    font: inherit;
    color: inherit;
}

input,
select {
    font: inherit;
    color: inherit;
    border: 0;
    border-radius: 0;
    outline: none;
    min-width: 0;
}

h1, h2, h3 {
    font-weight: normal;
}

.glyph-mono {
    font: bold 12px "Liberation Serif", serif;
}

.glyph-tiny {
    font: 7px "Liberation Sans", sans-serif;
}

/* menu */
.menu {
    display: flex;
    gap: 14px;
    height: 24px;
    padding-left: 7px;
    flex: none;
}

.menu a {
    color: #111;
    text-decoration: none;
    font-size: 15px;
    line-height: 26px;
    font-family: "Noto Sans CJK KR", sans-serif;
}

/* top toolbar */
.toolbar {
    display: flex;
    flex: none;
    height: 48px;
    background: #f2f2f2;
    border-top: 2px solid #f7f7f7;
    border-bottom: 2px solid #9a9a98;
}

.group {
    display: flex;
    align-items: center;
    padding: 0 0 0 10px;
    border-right: 1px solid #b5b5b5;
    background: radial-gradient(circle at 1px 1px, #bdbdbd 1px, transparent 2px) 4px 4px / 3px 4px repeat-y;
}

.sun {
    flex: 1;
    border-right: 0;
}

.group + .group {
    padding-left: 11px;
}

.tool {
    width: 42px;
    height: 41px;
}

.tool svg {
    width: 30px;
    height: 30px;
}

.tool.active {
    background: #c5def5;
    border: 1px solid #90c0ea;
}

.more {
    width: 21px;
    height: 41px;
}

.more svg {
    width: 12px;
    height: 7px;
}

.sep {
    width: 1px;
    height: 38px;
    margin: 0 4px 0 2px;
    background: #8c8c8c;
}

.slider {
    width: 146px;
    margin: 0 0 0 5px;
}

.slider + .slider {
    margin-left: 15px;
}

.range {
    display: block;
    width: 100%;
    height: 9px;
    appearance: none;
    border: 1px solid #999;
    border-top-width: 2px;
}

.range::-webkit-slider-thumb {
    appearance: none;
    width: 5px;
    height: 13px;
    background: #f4f4f4;
    border: 1px solid #999;
}

.months {
    background: linear-gradient(90deg, #fffdf0, #f0c53c 30%, #e97a1c 50%, #e00c0c 68%, #f0a0a5 87%, #fff);
}

.hours {
    background: linear-gradient(90deg, #fff, #8fb3d5 33%, #6a80e8 60%, #5668d8 72%, #0c0c18);
}

.ticks {
    display: flex;
    justify-content: space-between;
    padding: 0 3px;
    font: bold 9px/14px "Liberation Sans", "Noto Sans CJK KR", sans-serif;
}

.ticks.wide {
    padding: 0;
}

/* work area */
.work {
    position: relative;
    display: flex;
    flex: 1;
    min-height: 0;
}

.palette {
    width: 88px;
    flex: none;
    padding: 10px 0 0 2px;
    background: radial-gradient(circle at 1px 1px, #bdbdbd 1px, transparent 2px) 3px 4px / 4px 3px repeat-x, #f2f2f2;
}

.pair {
    display: grid;
    grid-template-columns: 42px 42px;
    grid-auto-rows: 42px;
}

.pair + .pair {
    padding-top: 4px;
    margin-top: 3px;
    border-top: 1px solid #8c8c8c;
}

.pair:last-child {
    border-bottom: 1px solid #b5b5b5;
}

.canvas {
    position: relative;
    flex: 1;
    min-width: 0;
    background: #cececc;
    border-left: 2px solid #70706e;
    border-top: 2px solid #70706e;
    border-bottom: 1px solid #fff;
    border-right: 1px solid #fff;
}

.scene {
    display: block;
    width: 100%;
    height: 100%;
}

.axis {
    fill: none;
    stroke-width: 1;
}

.blue { stroke: #1a1a9c; }
.green { stroke: #2f9c33; }
.red { stroke: #b51c22; }
.far { stroke-dasharray: 1 3; }

.edge {
    fill: none;
    stroke: #000;
    stroke-width: 1;
}

.outline {
    stroke-width: 2;
    stroke-linejoin: round;
}

/* keystroke overlay in the corner of the canvas */
.keys {
    position: absolute;
    right: 14px;
    bottom: 8px;
    width: 279px;
    display: flex;
    flex-direction: column;
    align-items: flex-start;
    gap: 27px;
}

.key {
    padding: 0 7px 0 4px;
    border-radius: 4px;
    background: #acacaa;
    box-shadow: 0 0 6px #bcbcba;
    color: #d8d8d6;
    font: 900 29px/45px Inter, sans-serif;
}

.fading {
    background: #bcbcba;
    box-shadow: 0 0 6px #c5c5c3;
    color: #cfcfcd;
}

/* caption bar over the lower part of the window */
.shade {
    position: absolute;
    left: 0;
    bottom: 0;
    width: 1310px;
    height: 72px;
    background: rgba(0, 0, 0, .42);
}

/* tray */
.tray {
    display: flex;
    flex-direction: column;
    width: 303px;
    flex: none;
    padding-left: 7px;
    background: #f1f1f1;
}

.tray-title {
    display: flex;
    align-items: center;
    height: 27px;
    flex: none;
    padding: 0 4px 0 5px;
    background: linear-gradient(#bccddf, #d8e4f1);
}

.tray-title h1 {
    flex: 1;
    font-size: 15px;
    line-height: 26px;
}

.pin svg {
    width: 9px;
    height: 11px;
}

.close-tray {
    width: 12px;
    height: 12px;
    margin-left: 8px;
    background: #c75050;
    color: #fff;
}

.close-tray svg {
    width: 6px;
    height: 6px;
}

.tray-body {
    display: flex;
    flex: 1;
    min-height: 0;
    overflow: hidden;
    padding-top: 2px;
}

.panels {
    flex: 1;
    min-width: 0;
}

.panel-head {
    display: flex;
    align-items: center;
    height: 23px;
    padding: 0 3px 0 8px;
    border-top: 1px solid #b0b0b0;
    background: linear-gradient(#dedede, #b3b3b3);
}

.panel-head h2 {
    flex: 1;
    font-size: 16px;
    line-height: 20px;
}

.arrow {
    width: 20px;
    font: 12px/20px "DejaVu Sans", sans-serif;
}

.close {
    width: 15px;
    height: 15px;
    background: #eee;
    border: 1px solid #999;
}

.close svg {
    width: 7px;
    height: 7px;
}

.entity {
    min-height: 203px;
}

.entity-type {
    display: flex;
    align-items: center;
    justify-content: space-between;
    height: 31px;
    padding: 0 7px 0 12px;
    margin-right: 1px;
    background: linear-gradient(#999, #999) 2px 100% / 245px 1px no-repeat;
}

.mini svg {
    width: 12px;
    height: 18px;
}

.entity-info {
    display: flex;
    gap: 2px;
    padding: 8px 11px 0 7px;
}

.face {
    display: flex;
    align-items: center;
    width: 35px;
    height: 60px;
    border: 1px solid #a0a0a0;
}

.face svg {
    width: 33px;
    height: 33px;
}

.face.big {
    width: 77px;
    height: 87px;
}

.face.big svg {
    width: 75px;
    height: 75px;
}

.fields {
    flex: 1;
    display: grid;
    grid-template-columns: 1fr 118px;
    grid-auto-rows: 23px;
    gap: 5px 4px;
}

.fields label {
    text-align: right;
    font-size: 13px;
    line-height: 23px;
    white-space: nowrap;
}

.field,
.drop {
    border: 1px solid #fff;
    border-top: 2px solid #7a7a7a;
    border-left: 2px solid #7a7a7a;
}

.field {
    width: 100%;
    padding-left: 2px;
    background: #f1f1f1;
    font-size: 13px;
}

.drop {
    position: relative;
    display: flex;
    background: #fff;
}

.drop select {
    width: 100%;
    padding-left: 2px;
    appearance: none;
    background: transparent;
    font-size: 13px;
}

/* button part of the drop-down */
.drop svg {
    position: absolute;
    top: 0;
    right: 0;
    width: 20px;
    height: 100%;
    padding: 0 5px;
    background: #f2f2f2;
    border-right: 1px solid #777;
    border-bottom: 1px solid #777;
    pointer-events: none;
}

.material {
    display: flex;
    gap: 3px;
    padding: 2px 0 3px 2px;
    border-bottom: 1px solid #999;
}

.name {
    width: 160px;
    height: 23px;
    color: #888;
    font-size: 12px;
}

.side {
    flex: 1;
    display: flex;
    flex-direction: column;
    align-items: center;
    justify-content: space-between;
    padding-top: 4px;
}

.create svg,
.dropper svg {
    width: 22px;
    height: 22px;
}

.chip {
    width: 26px;
    height: 26px;
}

.tabs {
    display: flex;
    align-items: flex-end;
    height: 31px;
}

.tab {
    width: 46px;
    height: 20px;
    border-right: 2px solid #777;
    border-top: 1px solid #fff;
    justify-content: flex-start;
    padding-left: 5px;
}

.tab.on {
    width: 51px;
    height: 22px;
    padding-left: 7px;
}

.dropper {
    margin: 0 2px 3px auto;
}

.nav {
    display: flex;
    align-items: center;
    height: 35px;
    padding: 0 4px 0 8px;
    border-bottom: 1px solid #999;
}

.nav .drop {
    width: 156px;
    height: 26px;
    margin: 0 9px 0 7px;
}

.nav .drop select {
    font-size: 12px;
}

.underlined::after {
    content: "";
    position: absolute;
    left: 3px;
    right: 24px;
    bottom: 1px;
    height: 1px;
    background: #000;
}

.page {
    width: 28px;
}

.page svg {
    width: 16px;
    height: 16px;
}

.page:first-child {
    width: 16px;
    margin-right: 6px;
}

.home svg {
    width: 20px;
    height: 20px;
}

.detail svg {
    width: 18px;
    height: 18px;
}

.list {
    display: flex;
    height: 383px;
    overflow: hidden;
    background: #fff;
}

.grid {
    flex: 1;
    display: grid;
    grid-template-columns: repeat(3, 62px);
    grid-auto-rows: 62px;
    gap: 2px;
    padding: 2px 3px;
}

.swatch {
    border: 1px solid #999;
    background-color: #fff;
    background-clip: content-box;
    padding: 1px;
}

.swatch svg {
    width: 36px;
    height: 36px;
}

.c1 { background-color: #fcd0d0; }
.c2 { background-color: #fa9c9c; }
.c3 { background-color: #f56666; }
.c4 { background-color: #f03838; }
.c5 { background-color: #eb0404; }
.c6 { background-color: #cc0204; }
.c7 { background-color: #9a0204; }
.c8 { background-color: #670204; }
.c9 { background-color: #fddbd0; }
.c10 { background-color: #fab49c; }
.c11 { background-color: #f89068; }
.c12 { background-color: #f46a35; }
.c13 { background-color: #f04008; }
.c14 { background-color: #cc360a; }
.c15 { background-color: #992808; }
.c16 { background-color: #661b04; }
.c17 { background-color: #fee7d0; }
.c18 { background-color: #fccf9c; }

.scroll {
    display: flex;
    flex-direction: column;
    align-items: center;
    width: 19px;
    background: #f1f1f1;
}

.scroll svg {
    width: 11px;
    height: 21px;
    flex: none;
}

.thumb {
    width: 19px;
    height: 21px;
    flex: none;
    background: #cdcdcd;
}

.end {
    margin-top: auto;
}

.outer {
    margin-left: 2px;
    width: 20px;
    border-left: 1px solid #fff;
}

.second {
    margin-top: 3px;
    border-top: 2px solid #777;
}

.second h3 {
    height: 23px;
    margin-top: 4px;
    padding-left: 4px;
    border-top: 1px solid #999;
    border-bottom: 1px solid #999;
    background: #e5e5e5;
    font-size: 12px;
    line-height: 21px;
}

.short {
    height: 64px;
}

/* status bar */
.status {
    display: flex;
    align-items: center;
    gap: 17px;
    height: 27px;
    flex: none;
    padding: 3px 6px 0 7px;
    background: #f1f1f1;
}

.badge svg {
    width: 18px;
    height: 18px;
}

.status p {
    flex: 1;
    margin-left: -5px;
    padding-left: 10px;
    border-left: 1px solid #888;
    font-size: 17px;
    line-height: 18px;
    white-space: nowrap;
}

.status label {
    padding-left: 10px;
    border-left: 1px solid #888;
    font-size: 17px;
    line-height: 18px;
}

.status input {
    width: 249px;
    height: 24px;
    margin-left: -6px;
    padding-left: 2px;
    border: 1px solid #a9b8cc;
    border-bottom: 0;
    background: #fff;
    font-size: 16px;
}
```
